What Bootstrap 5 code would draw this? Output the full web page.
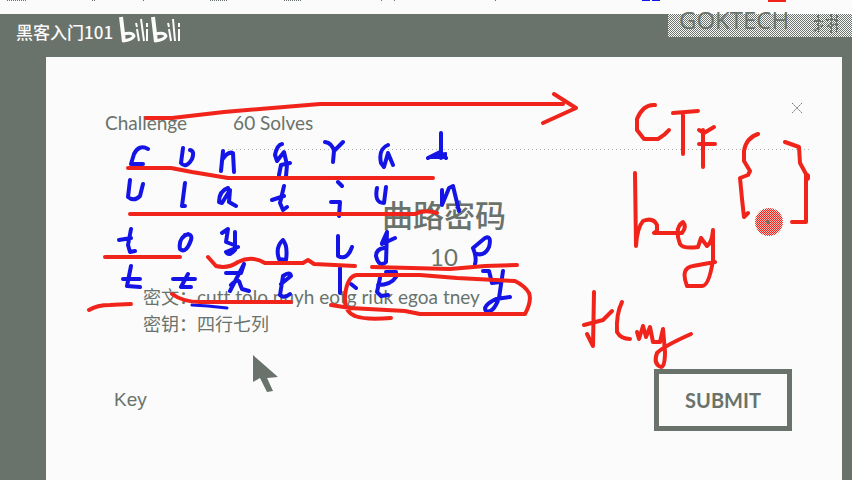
<!DOCTYPE html>
<html lang="zh-CN">
<head>
<meta charset="utf-8">
<meta name="viewport" content="width=device-width, initial-scale=1">
<title>曲路密码</title>
<link href="https://cdn.jsdelivr.net/npm/bootstrap@5.3.0/dist/css/bootstrap.min.css" rel="stylesheet">
<style>
:root { --ink: #69736b; --paper: #fbfbfb; }
body { background: var(--ink); color: var(--ink); font-family: Lato, "Noto Sans CJK SC", sans-serif; font-size: 18px; line-height: 27px; }
.page-edge { height: 14px; background: var(--paper); }
.top-bar { height: 43px; }
.channel { color: var(--paper); font-size: 17px; font-weight: 500; font-family: "Noto Sans CJK SC", sans-serif; line-height: 35px; padding-left: 16px; gap: 6px; }
.brand-plate { width: 184px; height: 23px; padding-left: 11px; font-family: "Open Sans", sans-serif; font-size: 24px; line-height: 12px;
  background: repeating-conic-gradient(#fbfbfb 0 25%, #69736b 0 50%) 0 0 / 2px 2px; gap: 24px; }
.dialog-sheet { background: var(--paper); margin: 0 10px 0 46px; padding: 39px 33px 49px 59px; }
.tabs-row { gap: 46px; padding-top: 13px; padding-bottom: 1px; font-size: 19px; }
.tabs-row a { color: var(--ink); text-decoration: none; }
.close-x { width: 24px; height: 24px; }
.rule { height: 1px; background: repeating-linear-gradient(90deg, #aab0ab 0 1px, transparent 1px 4px); margin: 12px 0 0 123px; }
.title-text { font-size: 31px; line-height: 40px; margin: 45px 0 0; padding-right: 26px; font-weight: 500; }
.points { font-size: 24px; line-height: 30px; margin: 7px 0 0; padding-right: 26px; }
.clue { margin: 12px 0 0 38px; font-variant-ligatures: none; }
.cipher { font-size: 19px; line-height: 20px; }
.answer-row { margin-top: 31px; padding: 0 17px 0 9px; }
.key-box { border: 0; background: transparent; color: var(--ink); font: 19px/28px "Liberation Sans", sans-serif; padding: 0; min-width: 0; outline: 0; }
.key-box::placeholder { color: var(--ink); opacity: 1; }
.submit-btn { border: 5px solid var(--ink); width: 138px; height: 62px; font-weight: 700; font-size: 20px; color: var(--ink); }
.pen-layer { inset: 0; width: 100%; pointer-events: none; }
</style>
<script src="https://cdn.jsdelivr.net/npm/bootstrap@5.3.0/dist/js/bootstrap.bundle.min.js"></script>
</head>
<body class="position-relative min-vh-100 overflow-hidden">
<div class="page-edge"></div>
<header class="top-bar d-flex justify-content-between align-items-start">
  <div class="channel d-flex">
    <span>黑客入门101</span>
    <svg width="62" height="32" viewBox="0 0 62 32" fill="none" stroke="#fbfbfb" stroke-width="3" aria-label="bilibili">
      <path d="M2 3L5 28M34 3L37 28" stroke-width="4"/>
      <path d="M4 20Q14 18 15 22Q13 26 4 27M36 20Q46 18 47 22Q45 26 36 27"/>
      <path d="M18 15L20 27M22 5L25 27M28 15L28 27M50 15L52 27M54 5L56 27M60 15L60 27M17 9L18 13M28 9L28 13M49 9L50 13M60 9L60 13" stroke-width="2"/>
    </svg>
  </div>
  <div class="brand-plate d-flex"><span>GOKTECH</span>
    <svg width="26" height="23" viewBox="0 0 26 23" fill="none" stroke="#69736b" stroke-width="2" stroke-dasharray="3 1"><path d="M1 7H10M5 1V18M1 17L10 11M13 6H24M18 0V19M14 12L24 10M24 1V18"/></svg>
  </div>
</header>
<main class="dialog-sheet">
  <div class="d-flex justify-content-between align-items-start">
    <nav class="tabs-row d-flex"><a href="#challenge">Challenge</a><a href="#solves">60 Solves</a></nav>
    <button class="close-x btn p-0 border-0 d-flex align-items-center justify-content-center" type="button" aria-label="Close"><svg width="12" height="12" viewBox="0 0 12 12" stroke="#69736b" stroke-dasharray="2 1"><path d="M1 1L11 11M11 1L1 11"/></svg></button>
  </div>
  <div class="rule"></div>
  <h1 class="title-text text-center">曲路密码</h1>
  <p class="points text-center">10</p>
  <p class="clue">密文：<span class="cipher">cutt tolo nuyh eotg riuk egoa tney</span><br>密钥：四行七列</p>
  <form class="answer-row d-flex justify-content-between align-items-center">
    <input class="key-box flex-grow-1" type="text" placeholder="Key" aria-label="Key">
    <button class="submit-btn btn rounded-0 p-0" type="button">SUBMIT</button>
  </form>
</main>
<svg class="pen-layer position-absolute" viewBox="0 0 852 480" fill="none" stroke-linecap="round" stroke-linejoin="round" aria-hidden="true">
  <defs><pattern id="speckle" width="2" height="2" patternUnits="userSpaceOnUse"><path d="M0 0h1v1h1v1h-1v-1h-1z" fill="#f0241a"/></pattern></defs>
  <g stroke="#69736b" stroke-width="1" stroke-linecap="butt" stroke-dasharray="1 1"><path d="M7 .5H26M92 .5h4M143 .5h2M210 .5H227M284 .5H301M381 .5h1M394 .5h1M495 .5h1"/></g>
  <g stroke-linecap="butt"><path d="M642 0H661" stroke="#1414e6" stroke-width="2" stroke-dasharray="8 2"/><path d="M768 0H786" stroke="#f0241a" stroke-width="4"/></g>
  <g stroke="#1414e6" stroke-width="4">
    <path d="M148 149Q139 144 134 154L131 164L143 164M183 148L181 163Q186 169 192 159Q195 151 190 150M223 151L221 171M222 160Q228 151 233 153L234 172M282 144Q277 145 275 155L277 161L284 152L287 165L286 176M290 163L281 165L279 175M325 142Q332 143 334 151L333 162M335 150L343 142M388 145Q378 149 381 163L384 167L388 153L393 165M441 133V158M428 158L440 152L446 158"/>
    <path d="M428 158L434 155L446 153L446 158Z" fill="#1414e6" stroke-width="2"/>
    <path d="M130 180L128 197Q134 202 140 196L143 184M185 183L182 206L185 206M228 188Q219 191 219 202L222 203L230 190L229 202L236 206M272 200L284 196M284 186L280 203L283 210L287 207M338 182L342 186M331 202H340L339 216M377 188Q374 203 384 203L386 187M442 190L442 205L449 188L453 186L459 211"/>
    <path d="M131 229L128 245L130 252L135 251M119 240L131 238M188 234Q178 238 180 249Q186 254 191 240Q193 233 185 235M222 233L228 229L226 242L234 245M235 232V250Q229 257 226 252L238 247M283 240Q275 247 279 259L286 260Q288 246 283 240M338 236L338 256Q347 261 352 247M395 238L382 244M387 232L386 262Q379 268 376 256Q376 249 384 248M387 232L382 243M473 248Q477 258 475 264M473 248L485 238Q492 235 489 247Q485 256 477 254"/>
    <path d="M131 266L127 286L140 287M123 279H140M188 274L181 287L191 287M173 279H195M244 264L230 291M226 273H241L244 264M231 285Q239 277 240 284L242 289L249 291M281 284L291 276Q290 271 283 276L280 295Q284 299 290 294M340 268V293M351 284L356 288M378 285Q391 285 396 277V272L386 272M380 278L377 292L381 296L388 295M483 271H489L492 283L500 282M503 271L499 298Q493 314 486 311Q482 306 496 299L510 297"/>
    <path d="M192 305L208 306L227 308" stroke-width="3"/>
  </g>
  <g stroke="#f0241a" stroke-width="4">
    <path d="M146 118H172L224 112L320 104H563M554 94L576 108L543 123"/>
    <path d="M128 168H171L192 172L228 178H433M130 214H415Q424 209 437 213M105 257H180M208 257L216 266Q228 269 238 262Q252 255 265 263H303L308 260L314 264L355 266M372 267L450 269L485 266L517 265"/>
    <path d="M89 310Q97 305 110 305L131 304M172 294Q183 302 200 302H291M331 305L350 308L405 311L420 314H525Q532 301 529 293Q525 286 515 281L457 278L420 275H357Q347 276 345 296Q344 312 355 316Q365 320 391 318"/>
    <path d="M655 105Q643 104 637 119V130L644 139H658Q665 135 669 130M673 113L698 111M683 113V154M699 130L704 133L714 127M703 130V167M699 144H715"/>
    <path d="M635 173L636 246Q637 228 643 221Q653 217 657 225V231L654 233H682Q687 227 683 222Q674 228 680 244Q683 249 698 247L701 238L707 246Q712 243 713 230L713 260Q709 286 702 286H687Q680 268 693 266L715 262"/>
    <path d="M594 292L593 346L587 334M584 325L603 320L612 311M622 302Q616 314 617 332Q621 339 630 339M637 332L639 339L643 326L646 337L650 327L653 342L660 342L663 329L665 352Q665 367 661 367Q653 364 657 353Q664 346 691 334"/>
    <path d="M758 134Q746 138 744 151V161L750 171L748 175L740 178L742 199L744 217L748 213M785 142L799 147L800 163L806 174V222H792"/>
    <path d="M807 176V178" stroke-width="6"/>
  </g>
  <circle cx="769" cy="222" r="13" fill="#f0241a" fill-opacity=".3"/><circle cx="769" cy="222" r="14" fill="url(#speckle)"/><circle cx="768" cy="222" r="2" fill="#69736b"/>
  <path d="M253 355V382L260 378L267 392L273 391L267 378L278 377Z" fill="#69736b"/>
</svg>
</body>
</html>
